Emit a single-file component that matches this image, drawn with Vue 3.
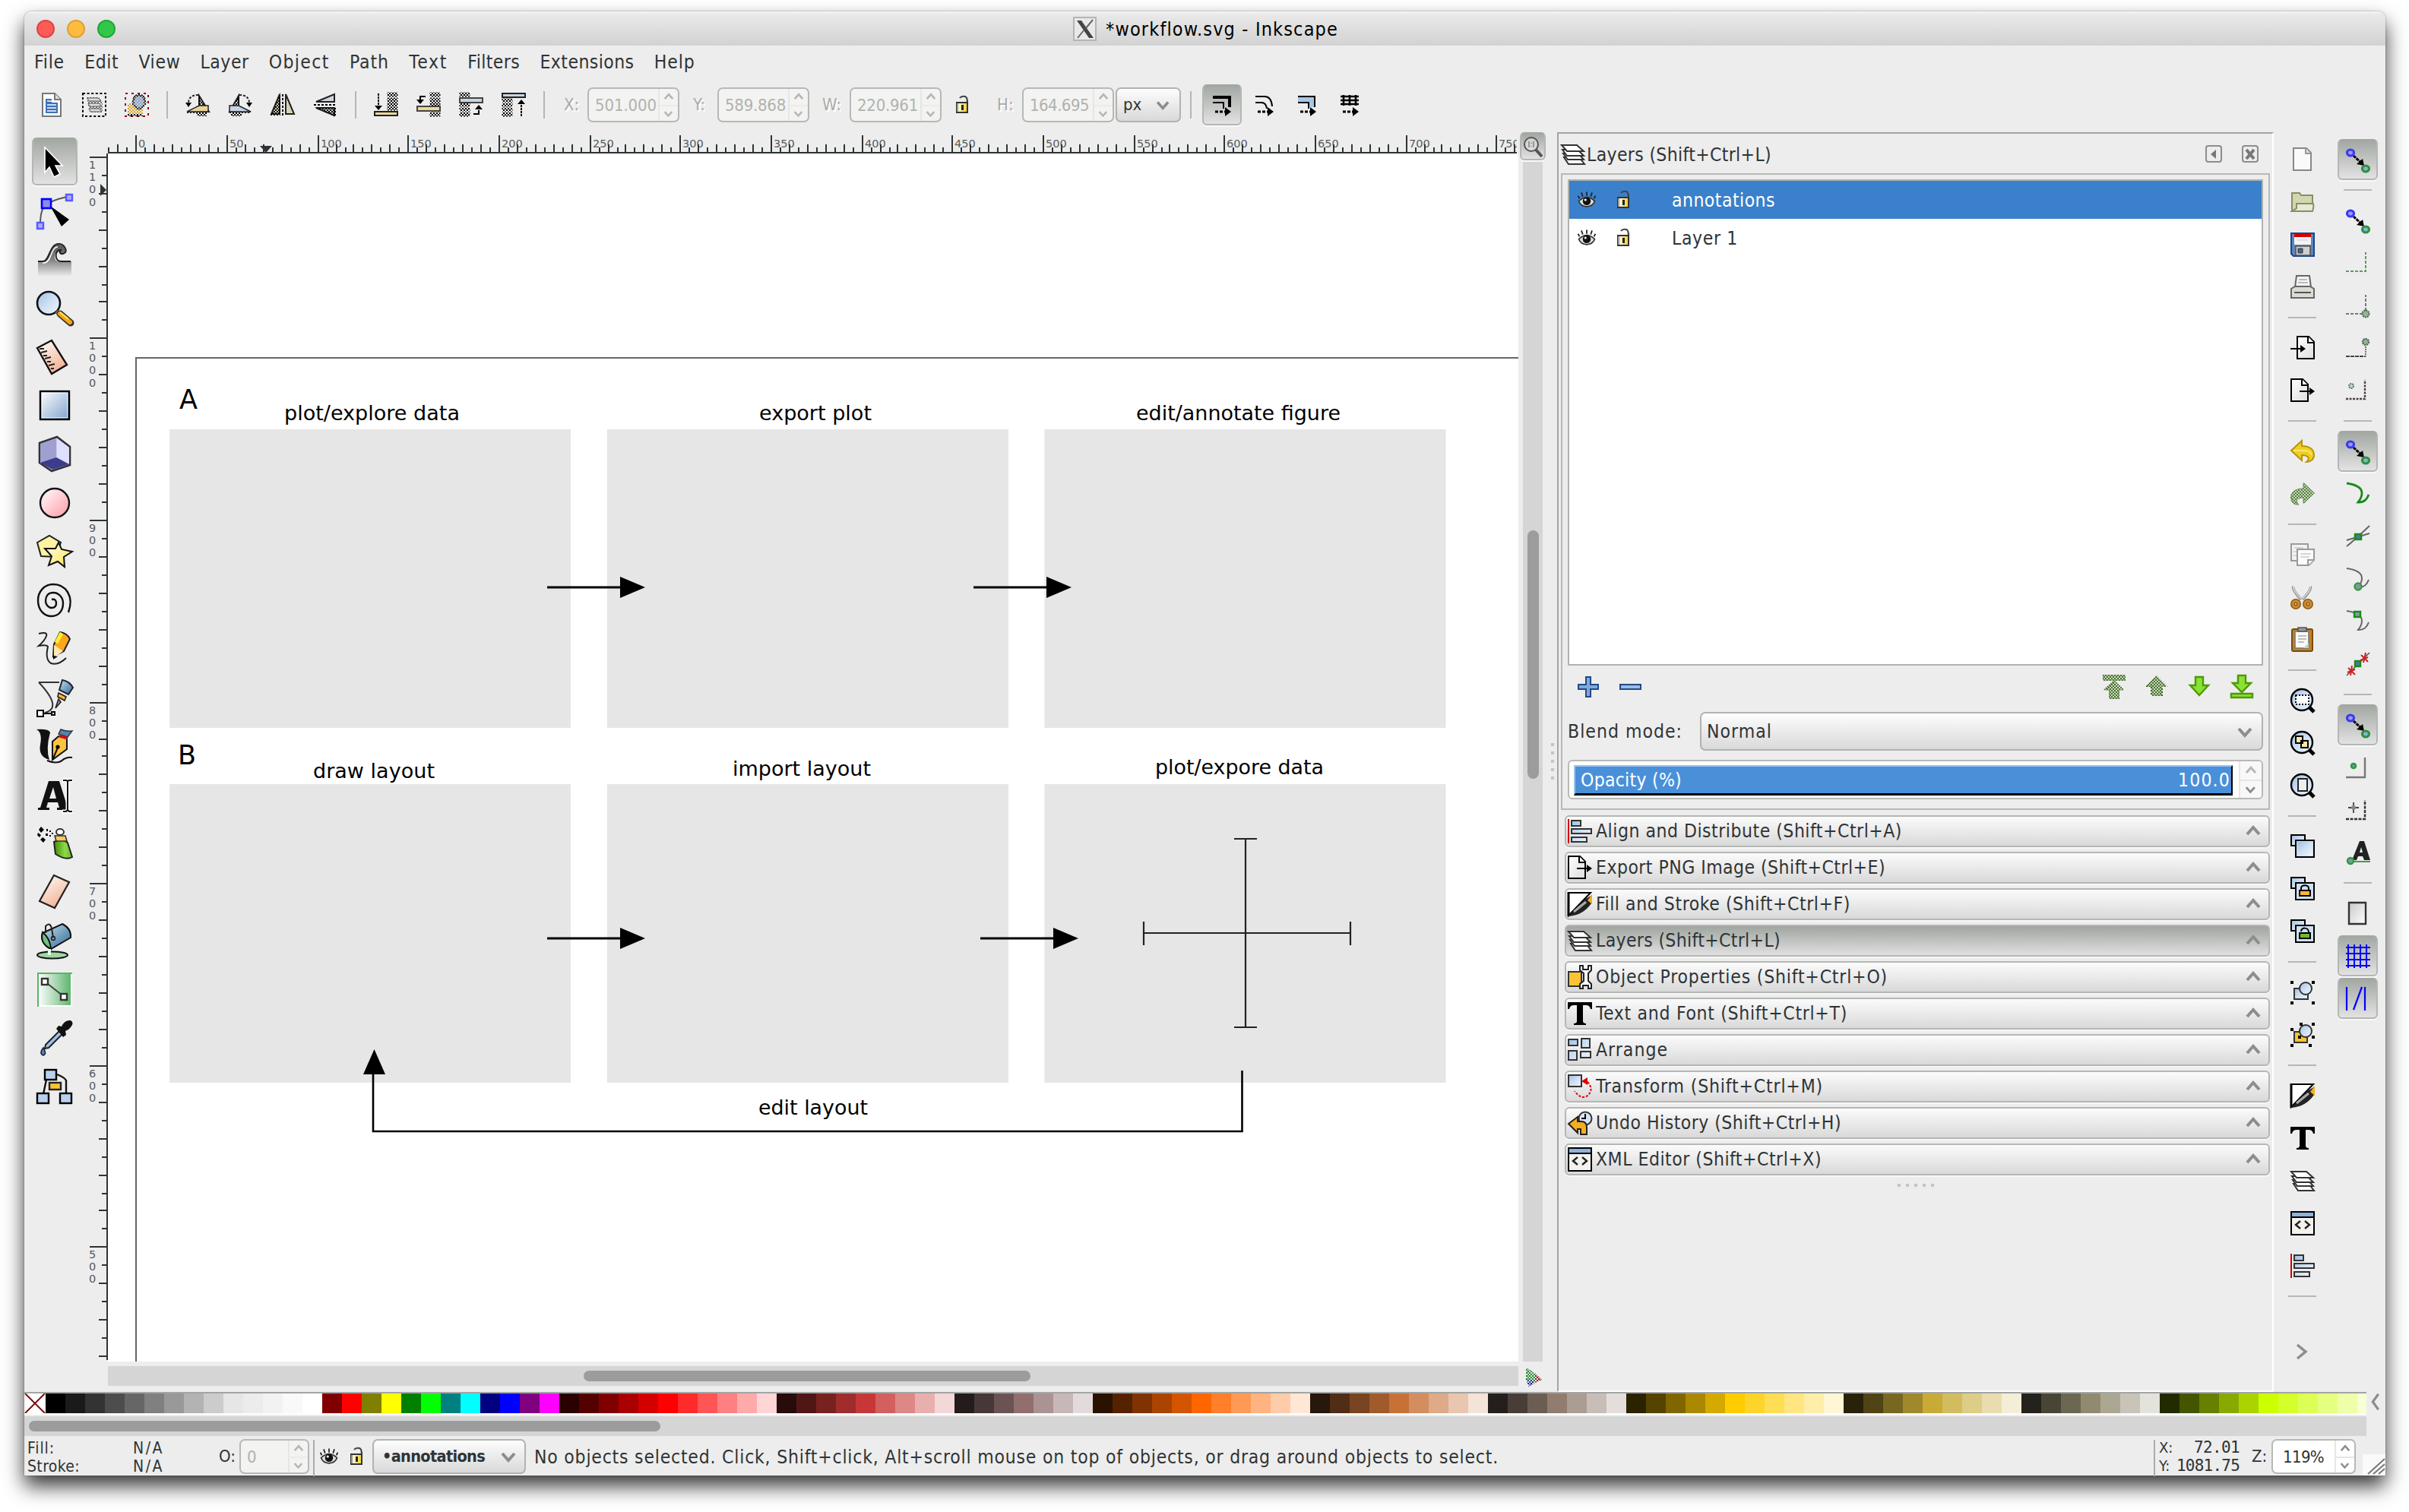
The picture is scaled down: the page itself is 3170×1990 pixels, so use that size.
<script setup>
// Sets letter-spacing so that a label takes a fixed advance width.
const vFit = {
  mounted(el, { value }) {
    if (!value) return
    const width = el.getBoundingClientRect().width
    el.style.letterSpacing = (value - width) / el.textContent.length + 'px'
  },
}

const menus = [
  ['File', 40], ['Edit', 45], ['View', 55], ['Layer', 64], ['Object', 80],
  ['Path', 52], ['Text', 51], ['Filters', 69], ['Extensions', 124], ['Help', 54],
]

const commands = [
  ['selall', 'selgroup', 'desel'],
  ['rotl', 'rotr', 'fliph', 'flipv'],
  ['tobottom', 'lower', 'raise', 'totop'],
]
const affect = ['affStroke', 'affCorner', 'affGrad', 'affPat']
const tools = [
  'tSelect', 'tNode', 'tTweak', 'tZoom', 'tMeasure', 'tRect', 'tBox', 'tEllipse', 'tStar', 'tSpiral',
  'tPencil', 'tPen', 'tCallig', 'tText', 'tSpray', 'tEraser', 'tBucket', 'tGradient', 'tDropper', 'tConnector',
]
const commandBar = [
  'new', 'open', 'save', 'print', '|', 'import', 'export', '|', 'undo', 'redo', '|', 'copy', 'cut', 'paste', '|',
  'zoomSel', 'zoomDraw', 'zoomPage', '|', 'dup', 'clone', 'unlink', '|', 'group', 'ungroup', '|',
  'fill', 'text', 'layers', 'xml', 'align', '|',
]
const snapBar = [
  '*snap', '|', 'snap', 'snBox', 'snBoxC', 'snBoxM', 'snBoxI', '|', '*snap', 'snPath', 'snCross', 'snCusp', 'snSmooth',
  'snMid', '|', '*snap', 'snObj', 'snRot', 'snText', '|', 'snPage', '*snGrid', '*snGuide',
]
const dialogs = [
  ['Align and Distribute (Shift+Ctrl+A)', 'align', 403], ['Export PNG Image (Shift+Ctrl+E)', 'export', 381],
  ['Fill and Stroke (Shift+Ctrl+F)', 'fill', 335], ['Layers (Shift+Ctrl+L)', 'layers', 243],
  ['Object Properties (Shift+Ctrl+O)', 'props', 384], ['Text and Font (Shift+Ctrl+T)', 'text', 331],
  ['Arrange', 'arrange', 95], ['Transform (Shift+Ctrl+M)', 'transform', 299],
  ['Undo History (Shift+Ctrl+H)', 'history', 323], ['XML Editor (Shift+Ctrl+X)', 'xml', 297],
]

const palette = (
  '000000 1a1a1a 333333 4d4d4d 666666 808080 999999 b3b3b3 cccccc e6e6e6 ececec f2f2f2 f9f9f9 ffffff ' +
  '800000 ff0000 808000 ffff00 008000 00ff00 008080 00ffff 000080 0000ff 800080 ff00ff ' +
  '2b0000 550000 800000 aa0000 d40000 ff0000 ff2a2a ff5555 ff8080 ffaaaa ffd5d5 ' +
  '280b0b 501616 782121 a02c2c c83737 d35f5f de8787 e9afaf f4d7d7 241c1c 483737 6c5353 916f6f ac9393 c8b7b7 e3dbdb ' +
  '2b1100 552200 803300 aa4400 d45500 ff6600 ff7f2a ff9955 ffb380 ffccaa ffe6d5 ' +
  '28170b 502d16 784421 a05a2c c87137 d38d5f deaa87 e9c6af f4e3d7 241f1c 483e37 6c5d53 917c6f ac9d93 c8beb7 e3dedb ' +
  '2b2200 554400 806600 aa8800 d4aa00 ffcc00 ffd42a ffdd55 ffe680 ffeeaa fff6d5 ' +
  '28220b 504416 786721 a0892c c8ab37 d3bc5f decd87 e9ddaf f4eed7 24221c 484537 6c6753 918a6f aca793 c8c4b7 e3e2db ' +
  '222b00 445500 668000 88aa00 aad400 ccff00 d4ff2a ddff55 e5ff80 eeffaa f6ffd5'
).split(' ').map((c) => '#' + c)

// Ruler ticks, in ruler pixels
const hTicks = []
for (let i = -3; i <= 152; i++) {
  const x = 36.6 + i * 11.933
  hTicks.push({ x: Math.round(x / 2) * 2, h: i % 10 === 0 ? 22 : i % 2 === 0 ? 10 : 6, label: i % 10 === 0 ? String(i * 5) : '' })
}
const vTicks = []
for (let i = 0; i <= 66; i++) {
  const y = 3.6 + i * 23.92
  vTicks.push({ y: Math.round(y / 2) * 2, w: i % 10 === 0 ? 22 : i % 2 === 0 ? 10 : 6, digits: i % 10 === 0 ? String(1100 - i * 10).split('') : [] })
}

const boxes = [[223, 565], [799, 565], [1374.5, 565], [223, 1032], [799, 1032], [1374.5, 1032]]
const arrows = [[720, 773], [1281, 773], [720, 1235], [1290, 1235]]
const captions = [
  ['plot/explore data', 374, 552, 231], ['export plot', 999, 552, 148], ['edit/annotate figure', 1495, 552, 269],
  ['draw layout', 412, 1023, 160], ['import layout', 964, 1020, 182], ['plot/expore data', 1520, 1018, 222],
  ['edit layout', 998, 1466, 144],
]

const S = 'fill="none" stroke="#000" stroke-width="2"'
const snap =
  '<path d="M10 11l10 9" stroke="#000" stroke-width="3" stroke-dasharray="4 1"/><path d="M24 24l-10-2 8-7z"/><ellipse cx="6" cy="7" rx="4.5" ry="4" fill="#9a9aff" stroke="#3a3aee" stroke-width="3.2"/><ellipse cx="26" cy="28" rx="4.500" ry="4" fill="#86b6cc" stroke="#2f8f3f" stroke-width="3.200"/>'
const lens = `<ellipse cx="15" cy="15" rx="14" ry="14" fill="url(#blueG)" stroke="#000" stroke-width="2.4"/><path d="M25 25l6 6" stroke="#000" stroke-width="5"/>`
const twoPages = `<path d="M1 1h18v14H1z" fill="url(#blueG)" ${S}/><path d="M7 8h24v22H7z" fill="#cfe0f2" stroke="#000" stroke-width="2"/>`
const layersIcon = `<g fill="#fff" stroke="#333" stroke-width="2"><path d="M4 20h20l7 9H10z"/><path d="M3 15h20l7 8H9z"/><path d="M2 10h20l8 8H8z"/><path d="M1 4h20l9 8H8z"/></g>`

const art = {
  selall: '<path d="M4 1h16l8 8v22H4z" fill="#fff" stroke="#777" stroke-width="2"/><path d="M20 1v8h8" fill="#ddd" stroke="#777" stroke-width="2"/><path d="M8 8h8v5h8v14H8z" fill="#3b73b9"/><path d="M10 11h6M10 16h12M10 20h12M10 24h12" stroke="#fff" stroke-width="1.6"/>',
  selgroup: '<rect x="1" y="1" width="30" height="30" fill="none" stroke="#000" stroke-width="2" stroke-dasharray="3 2.6"/><g mask="url(#dither)"><path d="M6 6h16l5 6v14H10z" fill="#777"/></g><path d="M7 7h14l4 4H9zM8 14h14l4 4H10zM9 21h14l3 4H11z" fill="#ddd" stroke="#555"/>',
  desel: '<rect x="1" y="1" width="30" height="30" fill="none" stroke="#800" stroke-width="2" stroke-dasharray="3 5"/><g mask="url(#dither)"><path d="M4 14h20v14H4z" fill="#d9a520"/><path d="M4 28h20v3H4z"/></g><ellipse cx="19" cy="12" rx="8" ry="9" fill="#c3cbd8"/><g mask="url(#dither)"><ellipse cx="19" cy="12" rx="8" ry="9" fill="#8fa3c0" stroke="#000" stroke-width="3"/></g><ellipse cx="19" cy="12" rx="8" ry="9" fill="none" stroke="#666"/>',
  rotl: '<path d="M18 4v20l13 1z" fill="#e8e8e8" stroke="#222" stroke-width="2"/><g mask="url(#dither)"><path d="M17 3v21h13zM2 24h28v3H2zM14 26h14v5H16z"/></g><path d="M2 25L18 17h12v8z" fill="#e9d49a" stroke="#222" stroke-width="1.5"/><path d="M17 3C8 3 4 7 4 14" fill="none" stroke="#222" stroke-width="2" stroke-dasharray="3 2"/><path d="M0 13h8l-4 6z"/>',
  rotr: '<path d="M14 4v20L2 25z" fill="#e8e8e8" stroke="#222" stroke-width="2"/><g mask="url(#dither)"><path d="M15 3v21H2zM2 24h28v3H2zM4 26h14v5H4z"/></g><path d="M30 25L14 17H2v8z" fill="#c8d4e4" stroke="#222" stroke-width="1.5"/><path d="M15 3c9 0 13 4 13 11" fill="none" stroke="#222" stroke-width="2" stroke-dasharray="3 2"/><path d="M32 13h-8l4 6z"/>',
  fliph: '<path d="M12 2v26H1zM20 2v26h11z" fill="#d8d2b8" stroke="#222" stroke-width="2"/><g mask="url(#dither)"><path d="M13 0v30H0z"/></g><path d="M16 2v28" stroke="#000" stroke-width="2" stroke-dasharray="3 2"/>',
  flipv: '<path d="M28 2v10H4zM28 30V20H4z" fill="#ccd6e0" stroke="#222" stroke-width="2"/><g mask="url(#dither)"><path d="M30 32V19H2z"/></g><path d="M1 16h29" stroke="#000" stroke-width="2" stroke-dasharray="3 2"/>',
  tobottom: '<path d="M6 1v20" stroke="#000" stroke-width="2" stroke-dasharray="3 1"/><path d="M1 17h10l-5 6z"/><path d="M1 25h30v5H1z" fill="#ecd79a" stroke="#222" stroke-width="2"/><g mask="url(#dither)"><path d="M18 0h13v5H18zM18 7h13v5H18zM18 13h13v5H18zM18 19h13v4H18z" stroke="#000"/></g>',
  lower: '<path d="M12 5H5v5" fill="none" stroke="#000" stroke-width="2"/><path d="M0 9h10l-5 6z"/><path d="M1 18h30v6H1z" fill="#ecd79a" stroke="#444" stroke-width="2"/><g mask="url(#dither)"><path d="M18 0h13v5H18zM18 7h13v5H18zM18 13h13v4H18zM18 26h13v5H18z" stroke="#000"/></g>',
  raise: '<path d="M1 7h30v6H1z" fill="#c6d5e4" stroke="#444" stroke-width="2"/><path d="M19 28h7v-5" fill="none" stroke="#000" stroke-width="2"/><path d="M21 22h10l-5-6z"/><g mask="url(#dither)"><path d="M1 0h13v5H1zM1 14h13v4H1zM1 20h13v4H1zM1 26h13v5H1z" stroke="#000"/></g>',
  totop: '<path d="M1 1h30v5H1z" fill="#c6d5e4" stroke="#222" stroke-width="2"/><path d="M26 12v19" stroke="#000" stroke-width="2" stroke-dasharray="3 1"/><path d="M21 15h10l-5-6z"/><g mask="url(#dither)"><path d="M1 8h13v4H1zM1 14h13v4H1zM1 20h13v4H1zM1 26h13v5H1z" stroke="#000"/></g>',
  affStroke: '<path d="M4 6h22v13" fill="none" stroke="#000" stroke-width="4"/><path d="M4 13h14v8" fill="none" stroke="#000" stroke-width="2"/><path d="M7 25h14" stroke="#000" stroke-width="3" stroke-dasharray="4 2"/><path d="M20 19l8 6-8 6z"/>',
  affCorner: '<path d="M4 5h12q9 0 10 13" fill="none" stroke="#000" stroke-width="2"/><path d="M4 13h8q6 0 7 8" fill="none" stroke="#000" stroke-width="2"/><path d="M7 25h14" stroke="#000" stroke-width="3" stroke-dasharray="4 2"/><path d="M20 19l8 6-8 6z"/>',
  affGrad: '<path d="M4 5h22v14h-8v-6H4z" fill="#a9c6e6"/><path d="M4 5h22v14M4 13h14v8" fill="none" stroke="#000" stroke-width="2"/><path d="M7 25h14" stroke="#000" stroke-width="3" stroke-dasharray="4 2"/><path d="M20 19l8 6-8 6z"/>',
  affPat: '<path d="M4 5h24M4 10h24M4 15h24M8 3v14M16 3v14M24 3v14" stroke="#000" stroke-width="2.600"/><path d="M7 25h14" stroke="#000" stroke-width="3" stroke-dasharray="4 2"/><path d="M20 19l8 6-8 6z"/>',
  lock: '<path d="M12 7q2-3 7-2 3 1 3 8" fill="none" stroke="#444" stroke-width="2.2"/><path d="M8 13h14v13H8z" fill="url(#lockG)" stroke="#333" stroke-width="2"/><path d="M9 14v11" stroke="#999" stroke-width="2"/><path d="M14 16h3v7h-3z" fill="#222"/>',
  eye: '<path d="M4 18q12-12 24 0q-3 8-12 8t-12-8z" fill="#ddd" stroke="#333" stroke-width="2"/><circle cx="16" cy="18" r="6" fill="#111"/><circle cx="14" cy="16" r="1.8" fill="#fff"/><path d="M5 14l-2-4M10 11L8 5M16 10V4M22 11l2-6M27 14l2-4" stroke="#222" stroke-width="2"/>',
  new: '<path d="M4 1h17l6 6v23H4z" fill="#fafafa" stroke="#888" stroke-width="2"/><path d="M20 1v7h7" fill="#ddd" stroke="#999" stroke-width="2"/>',
  open: '<path d="M2 28V4h10l2 3h15v14" fill="#d3d7ae" stroke="#8a8d68" stroke-width="2"/><path d="M2 28l6-4V18h22q1 4-1 10z" fill="#e6ead2" stroke="#8a8d68" stroke-width="2"/>',
  save: '<path d="M1 1h30v30H4l-3-3z" fill="#5d86bd" stroke="#1d4586" stroke-width="2"/><path d="M5 1h22v15H5z" fill="#f4f4f4"/><path d="M5 1h22v5H5z" fill="#d40000"/><path d="M9 10h14" stroke="#ccc"/><path d="M7 18h19v12H7z" fill="#d0d0d0" stroke="#555" stroke-width="1.6"/><path d="M10 21h6v6h-6z" fill="#3a6aa8" stroke="#333"/>',
  print: '<path d="M8 1h17l2 15H6z" fill="#f4f4f4" stroke="#666" stroke-width="2"/><path d="M11 6h11M10 10h13" stroke="#aaa" stroke-width="1.6"/><path d="M1 18l5-3h20l5 3v12H1z" fill="#d9dcd5" stroke="#666" stroke-width="2"/><path d="M5 23h22" stroke="#555" stroke-width="2"/>',
  import: '<path d="M9 1h15l7 7v22H9z" fill="url(#whiteG)" stroke="#000" stroke-width="2"/><path d="M23 1v8h8" fill="#fff" stroke="#000" stroke-width="2"/><path d="M0 17h16" stroke="#000" stroke-width="2"/><path d="M13 12l7 5-7 5z"/>',
  export: '<path d="M1 1h15l7 7v22H1z" fill="url(#whiteG)" stroke="#000" stroke-width="2"/><path d="M15 1v8h8" fill="#fff" stroke="#000" stroke-width="2"/><path d="M12 17h16" stroke="#000" stroke-width="2"/><path d="M25 12l7 5-7 5z"/>',
  undo: '<path d="M1 15L15 2v7c12 0 16 6 16 12s-5 9-10 9c5-4 3-9-6-9v7z" fill="#f0cf20" stroke="#b8930a" stroke-width="2"/><path d="M4 15h14c6 0 9 3 10 6" fill="none" stroke="#fff08a" stroke-width="1.5"/>',
  redo: '<g mask="url(#dither)"><path d="M32 15L17 1v8C4 9 0 15 0 21s5 10 11 10c-5-4-3-10 6-10v8z" fill="#2f6a10"/></g><path d="M31 15L17 2v7C5 9 1 15 1 21s5 9 10 9c-5-4-3-9 6-9v7z" fill="#8fae7c" fill-opacity=".35" stroke="#6a8a58" stroke-width="1"/>',
  copy: '<g fill="#f2f2f2" stroke="#9a9a9a" stroke-width="2"><path d="M1 2h22v22H1z"/><path d="M9 9h22v14l-7 7H9z" fill="#fbfbfb"/><path d="M31 23h-8v7"/></g><path d="M13 15h14M13 19h12M5 7h12M4 12h4M4 17h4" stroke="#ccc" stroke-width="1.6"/>',
  cut: '<path d="M4 2q-2 4 10 17M26 2q2 4-10 17" fill="none" stroke="#999" stroke-width="4"/><path d="M4 2q-1 5 10 16M26 2q1 5-10 16" fill="none" stroke="#ddd" stroke-width="1.5"/><g fill="none" stroke="#8a5a10" stroke-width="6"><circle cx="7" cy="25" r="4"/><circle cx="23" cy="25" r="4"/></g><g fill="none" stroke="#d08a30" stroke-width="3"><circle cx="7" cy="25" r="4"/><circle cx="23" cy="25" r="4"/></g>',
  paste: '<rect x="2" y="2" width="27" height="29" rx="2" fill="#c08428" stroke="#7a4c08" stroke-width="2"/><path d="M6 5h18v22H6z" fill="#fafafa" stroke="#777" stroke-width="1.6"/><path d="M10 0h11v5H10z" fill="#999" stroke="#555" stroke-width="1.6"/><path d="M10 11h11M10 15h11M10 19h8" stroke="#aaa" stroke-width="1.6"/><path d="M24 20l-7 7h7z" fill="#ccc"/>',
  zoomSel: lens + '<path d="M7 9h17v12H7z" fill="#fff" stroke="#000" stroke-width="2" stroke-dasharray="2 2"/>',
  zoomDraw: lens + '<path d="M7 7h9v9H7zM14 13h9v9h-9z" fill="#ffe9a0" stroke="#000" stroke-width="2"/>',
  zoomPage: lens + '<path d="M10 7h12v16H10z" fill="#eee" stroke="#222" stroke-width="2"/>',
  dup: twoPages + '<path d="M9 10h20v18H9z" fill="url(#blueG)"/>',
  clone: twoPages + '<path d="M14 18v-3c0-5 10-5 10 0v3" fill="none" stroke="#000" stroke-width="2"/><path d="M12 18h14v7H12z" fill="#ffb62e" stroke="#000" stroke-width="2"/>',
  unlink: twoPages + '<path d="M14 16c0-6 10-6 10 1" fill="none" stroke="#000" stroke-width="2"/><path d="M12 18h14v7H12z" fill="#6fba2e" stroke="#000" stroke-width="2"/>',
  group: '<path d="M5 11h18v14H5z" fill="url(#blueG)" stroke="#333" stroke-width="2"/><ellipse cx="20" cy="11" rx="8" ry="8" fill="url(#blueG)" stroke="#333" stroke-width="2"/><path d="M0 1h4v4H0zM28 1h4v4h-4zM0 28h4v4H0zM28 28h4v4h-4z"/>',
  ungroup: '<path d="M5 12h17v14H5z" fill="#ffc22e" stroke="#333" stroke-width="2"/><ellipse cx="20" cy="11" rx="8" ry="8" fill="url(#blueG)" stroke="#333" stroke-width="2"/><path d="M0 7h4v4H0zM28 0h4v4h-4zM0 28h4v4H0zM24 28h4v4h-4zM12 0h4v4h-4zM28 17h4v4h-4zM10 17h4v4h-4z"/>',
  fill: '<path d="M1 1h29L1 31z" fill="#fff" stroke="#000" stroke-width="2"/><path d="M1 0v32" stroke="#000" stroke-width="3"/><path d="M0 32Q14 20 22 10L32 4 31 15Q20 31 0 32z" fill="#222"/><path d="M8 26L24 13" stroke="#aaa" stroke-width="3"/><path d="M32 3l-6 8 6 5z" fill="#f5b020"/>',
  text: '<path d="M0 1h32v9h-2q-1-5-6-5h-4v21q0 3 4 3v2H8v-2q4 0 4-3V5H8q-5 0-6 5H0z"/>',
  layers: layersIcon,
  xml: '<path d="M1 1h30v30H1z" fill="#f4f2ec" stroke="#000" stroke-width="2"/><path d="M2 2h28v5H2z" fill="#8fb2dc"/><path d="M1 8h30" stroke="#000" stroke-width="2"/><path d="M13 13l-6 5 6 5M19 13l6 5-6 5" fill="none" stroke="#222" stroke-width="2.4"/>',
  align: '<path d="M1 0v32" stroke="#d00000" stroke-width="2"/><g fill="url(#blueG)" stroke="#333" stroke-width="2"><path d="M5 2h12v7H5zM5 13h26v6H5zM5 24h20v6H5z"/></g>',
  props: '<path d="M1 9h17v19H1z" fill="#fcc433" stroke="#333" stroke-width="2"/><path d="M16 1v6l5 4v10l-5 4v6h4v-4h7v4h4v-6l-4-4V11l4-4V1h-4v5h-7V1z" fill="#fff" stroke="#222" stroke-width="2"/>',
  arrange: '<g fill="url(#blueG)" stroke="#333" stroke-width="2"><path d="M1 2h12v8H1zM18 1h11v12H18zM1 17h11v12H1zM17 18h13v8H17z"/></g>',
  transform: '<path d="M1 1h17v15H1z" fill="url(#blueG)" stroke="#333" stroke-width="2"/><path d="M26 10q9 10 0 18q-8 6-17-6" fill="none" stroke="#d00" stroke-width="2" stroke-dasharray="3 2"/><path d="M18 9l8-5v10z" fill="#d00"/>',
  history: '<circle cx="23" cy="10" r="8.5" fill="#d7e4f3" stroke="#333" stroke-width="2"/><path d="M23 4v6h-5" fill="none" stroke="#000" stroke-width="2"/><path d="M1 17l12-9v6h5q7 0 7 8v9h-8v-7h-4v5z" fill="#f6ae1f" stroke="#222" stroke-width="2"/>',
  snap,
  snBox: '<path d="M0 27h26V2" fill="none" stroke="#5f9a66" stroke-width="2" stroke-dasharray="4 2"/>',
  snBoxC: '<path d="M0 27h26V2" fill="none" stroke="#777" stroke-width="2" stroke-dasharray="4 2"/><circle cx="26" cy="27" r="4.5" fill="#9ab09a" stroke="#4a6a4a" stroke-width="2" stroke-dasharray="2 1"/>',
  snBoxM: '<path d="M0 27h26" stroke="#444" stroke-width="2" stroke-dasharray="5 1"/><path d="M26 14v13" stroke="#777" stroke-width="2" stroke-dasharray="2 1"/><circle cx="26" cy="8" r="4" fill="#9ab09a" stroke="#4a6a4a" stroke-width="2.4" stroke-dasharray="2 1"/>',
  snBoxI: '<path d="M0 27h25V2" fill="none" stroke="#444" stroke-width="2.4" stroke-dasharray="3 1.5"/><circle cx="7" cy="10" r="3" fill="#c4d4c4" stroke="#5a7a5a" stroke-width="2" stroke-dasharray="2 1"/>',
  snPath: '<path d="M1 2q20 3 20 13 0 6-5 12 10 1 14-10" fill="none" stroke="#1b8a1b" stroke-width="2.8"/>',
  snCross: '<path d="M1 21l30-9M1 29Q10 22 31 2" fill="none" stroke="#666" stroke-width="2"/><rect x="12" y="13" width="8" height="7" fill="#4a7a9a" stroke="#1b8a1b" stroke-width="2.4"/>',
  snCusp: '<path d="M1 2q20 3 20 13 0 6-5 12 10 1 14-10" fill="none" stroke="#666" stroke-width="2"/><circle cx="16" cy="26" r="4.5" fill="#7a9ab0" stroke="#3a9a3a" stroke-width="2.4"/>',
  snSmooth: '<path d="M1 2q20 3 20 13 0 6-5 12 10 1 14-10" fill="none" stroke="#666" stroke-width="2"/><rect x="11" y="3" width="8" height="7" fill="#7a9ab0" stroke="#1b8a1b" stroke-width="2.4"/>',
  snMid: '<path d="M1 31L31 1" stroke="#555" stroke-width="1.6"/><rect x="12" y="12" width="7" height="7" fill="#4a7a9a" stroke="#1b8a1b" stroke-width="2.4"/><path d="M3 21l9 9M8 18l-2 13M2 27l10-4M20 4l9 9M26 1l-3 13M19 11l10-4" stroke="#d02020" stroke-width="2"/>',
  snObj: '<path d="M0 29h25V3" fill="none" stroke="#777" stroke-width="2.4"/><circle cx="10" cy="14" r="3" fill="#7a9ab0" stroke="#2f9a3f" stroke-width="2.6"/>',
  snRot: '<path d="M0 28h25V3" fill="none" stroke="#333" stroke-width="2.4" stroke-dasharray="4 1.5"/><path d="M3 13h14M10 6v14" stroke="#444" stroke-width="1.8"/><circle cx="10" cy="13" r="3" fill="#888"/>',
  snText: '<path d="M8 26L18 1h6l8 25h-8l-2-5h-6l-2 5zM18 16h4l-2-7z" fill-rule="evenodd" fill="#222"/><path d="M2 28h30" stroke="#4a9a4a" stroke-width="2"/><circle cx="6" cy="27" r="4" fill="#7a9ab0" stroke="#2f9a3f" stroke-width="2.4"/>',
  snPage: '<path d="M4 2h22v28H4z" fill="url(#pageG)" stroke="#333" stroke-width="2.4"/>',
  snGrid: '<path d="M0 5h32M0 13h32M0 21h32M0 29h32M3 1v31M11 1v31M19 1v31M27 1v31" stroke="#0000ff" stroke-width="2"/>',
  snGuide: '<path d="M1 1v31M25 1v31M21 1L10 31" stroke="#0000ff" stroke-width="2.2" fill="none"/>',
  chevU: '<path d="M8 20l8-9 8 9" fill="none" stroke="#8b8e89" stroke-width="4"/>',
  chevD: '<path d="M7 12l8 9 8-9" fill="none" stroke="#8b8e89" stroke-width="4"/>',
  chevR: '<path d="M9 8l11 9L9 26" fill="none" stroke="#8b8e89" stroke-width="3.4"/>',
  chevL: '<path d="M20 5l-8 11 8 11" fill="none" stroke="#8b8e89" stroke-width="3.4"/>',
  plus: '<path d="M13 3h6v10h10v6H19v10h-6V19H3v-6h10z" fill="#7fa9dc" stroke="#204a87" stroke-width="2"/>',
  minus: '<path d="M2 13h27v6H2z" fill="#9abce6" stroke="#204a87" stroke-width="2"/>',
  lTop: '<g mask="url(#dither)"><path d="M1 0h30v8H1zM16 7l14 13h-7v12H9V20H2z" fill="#245a05"/></g><path d="M2 1h28v6H2zM16 8l12 12h-6v11H10V20H4z" fill="#8fb070" fill-opacity=".3" stroke="#6f8f60" stroke-width="1"/>',
  lUp: '<g mask="url(#dither)"><path d="M16 1l15 15h-7v12H8V16H1z" fill="#245a05"/></g><path d="M16 3l12 12h-6v12H10V15H4z" fill="#8fb070" fill-opacity=".3" stroke="#6f8f60" stroke-width="1"/>',
  lDown: '<path d="M11 3h10v11h7L16 27 4 14h7z" fill="#8ae234" stroke="#4e9a06" stroke-width="2.4"/>',
  lBottom: '<path d="M11 1h10v10h7L16 23 4 11h7zM2 25h28v5H2z" fill="#8ae234" stroke="#4e9a06" stroke-width="2.4"/>',
  tSelect: '<path d="M11 4v33l6-7 6 13 8-4-6-11h9z" fill="#000" stroke="#fff" stroke-width="1.6"/>',
  tNode: '<path d="M5 41Q5 22 12 16T40 5" fill="none" stroke="#555" stroke-width="2"/><path d="M18 17l25 18-10 9z"/><rect x="7" y="8" width="12" height="12" fill="#8a8af0" stroke="#0000ff" stroke-width="2.6"/><rect x="39" y="2" width="8" height="8" fill="#aaf" stroke="#5a5aff" stroke-width="2.4"/><rect x="1" y="39" width="8" height="8" fill="#aaf" stroke="#5a5aff" stroke-width="2.4"/>',
  tTweak: '<path d="M2 26h7c8 0 8-22 20-22 8 0 12 9 8 12-5 3-8-1-8-4-6 1-7 14 0 14h17v20H2z" fill="url(#grayG)"/><path d="M2 26h7c8 0 8-23 20-23 8 0 12 9 8 12-5 3-8-1-5-4-8-1-9 15 0 15h13" fill="none" stroke="#222" stroke-width="2"/><path d="M8 28h3c9-2 8-21 17-21" fill="none" stroke="#fff" stroke-width="1.4"/>',
  tZoom: '<circle cx="16" cy="17" r="15" fill="url(#blueG)" stroke="#111" stroke-width="2.6"/><path d="M26 28l7 6" stroke="#777" stroke-width="5"/><path d="M31 31L45 43" stroke="#333" stroke-width="9" stroke-linecap="round"/><path d="M31 31L44 42" stroke="#f9a416" stroke-width="6" stroke-linecap="round"/><path d="M31 29L42 38" stroke="#ffe95a" stroke-width="2"/>',
  tMeasure: '<path d="M1 12L20 2l20 32-20 12z" fill="url(#skinG)" stroke="#111" stroke-width="2.4"/><path d="M4 13l6 0M6 18l8-2M9 22h5M11 26l8-2M14 30h5M16 35l8-2M19 39h4" stroke="#222" stroke-width="2"/>',
  tRect: '<rect x="5" y="5" width="38" height="37" fill="url(#blueD)" stroke="#000" stroke-width="2.4"/><rect x="7.500" y="7.500" width="33" height="32" fill="none" stroke="#fff" stroke-opacity=".6"/>',
  tBox: '<path d="M4 9L27 1l17 13v24l-24 8L4 35z" fill="#c8c8ee" stroke="#333" stroke-width="2.6"/><path d="M5 10L26 3v26L5 36z" fill="#a0a0d0"/><path d="M27 3l16 12v22L27 28z" fill="#dedeff"/><path d="M5 35l21-7 17 9-22 7z" fill="#3c3c8c"/>',
  tEllipse: '<ellipse cx="24" cy="24" rx="19" ry="19" fill="url(#pinkG)" stroke="#111" stroke-width="2.4"/>',
  tStar: '<path d="M1 12L17 3l15 9-6 19-20-1z" fill="#fff2a0" stroke="#222" stroke-width="2"/><path d="M29 12l4 9 14 3-11 7 1 13-9-7-12 5 4-12-9-10h14z" fill="url(#yelG)" stroke="#111" stroke-width="2"/>',
  tSpiral: '<path d="M42 40c8-22-4-37-20-37C10 3 2 13 2 24c0 13 8 21 18 21 9 0 15-7 15-17 0-8-6-14-13-14s-10 5-10 11c0 5 4 9 8 9s6-2 6-6-2-6-6-5" fill="none" stroke="#111" stroke-width="2.4"/>',
  tPencil: '<path d="M3 4q12-3 10 3T3 20q10-2 12 1-4 17 4 22 10 3 20-7" fill="none" stroke="#222" stroke-width="2"/><path d="M22 34l1-16L31 2q9 1 13 9l-8 16z" fill="#fba71b" stroke="#222" stroke-width="2"/><path d="M26 16l7-13" stroke="#ffee30" stroke-width="5"/><path d="M23 19l12 8-12 9z" fill="#ffe9b0"/><path d="M22 33v5l6-4z"/>',
  tPen: '<path d="M3 4h27M3 4q32 34 8 40" fill="none" stroke="#333" stroke-width="2"/><path d="M30 14L34 1q10 2 14 10l-6 9z" fill="url(#blueD2)" stroke="#223" stroke-width="2"/><path d="M29 18l10 5-2 5-9-5z" fill="#fcb52a" stroke="#222" stroke-width="1.6"/><path d="M29 26l-4 12 7-8z" fill="#999" stroke="#222" stroke-width="1.6"/><path d="M8 45h14" stroke="#000" stroke-width="2"/><rect x="1" y="41" width="8" height="8" fill="#fff" stroke="#000" stroke-width="2"/><rect x="20" y="43" width="4" height="4" fill="#fff" stroke="#000" stroke-width="2"/>',
  tCallig: '<path d="M0 2q16-1 18 4-6 22-1 36Q2 38 5 22 8 6 0 2z" fill="#111"/><path d="M14 43q14 6 22-2 6-3 11-2" fill="none" stroke="#111" stroke-width="2"/><path d="M21 42V18l8-7 11 3v14z" fill="#f9c440" stroke="#111" stroke-width="2"/><path d="M22 40l6-14" stroke="#111" stroke-width="2"/><circle cx="28" cy="25" r="2.600"/><path d="M29 8l3-6q8 3 15 2l-6 8z" fill="#4f86b5" stroke="#333" stroke-width="1.4"/><path d="M30 10l11 4" stroke="#d01020" stroke-width="3.500"/>',
  tText: '<path d="M2 44v-3h3L16 6h14l11 35h2v3H27v-3h3l-2-7H15l-2 7h4v3zM17 29h9L22 14z" fill="#111" fill-rule="evenodd"/><path d="M34 5h5l2 2 2-2h5M41 6v38M34 46h5l2-2 2 2h5" fill="none" stroke="#fff" stroke-width="5"/><path d="M35 5h4l2 1 2-1h4M41 6v38M35 46h4l2-2 2 2h4" fill="none" stroke="#111" stroke-width="2"/>',
  tSpray: '<path d="M23 22q10-5 18 1l6 19q-8 5-22-4z" fill="url(#greenD)" stroke="#222" stroke-width="2"/><path d="M24 14h14l2 7H26z" fill="#f8c85a" stroke="#333" stroke-width="1.600"/><ellipse cx="31" cy="9" rx="5" ry="4" fill="#fff" stroke="#333" stroke-width="2"/><path d="M6 2l4 4-4 4-3-4zM2 10l4 3-2 3-3-3zM8 16l4 3-3 4-4-4zM13 5h2v3h-2zM12 11h3v3h-3zM17 7h2v2h-2zM17 13h2v2h-2zM20 10h2v2h-2z"/>',
  tEraser: '<path d="M23 2l20 9L24 45 4 36z" fill="url(#skinG)" stroke="#222" stroke-width="2.2"/>',
  tBucket: '<ellipse cx="21" cy="43" rx="20" ry="4.500" fill="#9fd6a4" stroke="#111" stroke-width="2"/><path d="M8 14L34 2q12 6 11 18L19 35Q4 26 8 14z" fill="url(#blueD2)" stroke="#111" stroke-width="2"/><path d="M8 13q10 8 11 22Q4 28 8 13z" fill="#6fc27c" stroke="#111" stroke-width="2"/><path d="M17 35v8" stroke="#dfd" stroke-width="4"/><path d="M12 14V5q6-6 8 3l2 12" fill="none" stroke="#222" stroke-width="2"/><circle cx="22" cy="21" r="2.400" fill="none" stroke="#222" stroke-width="1.600"/>',
  tGradient: '<rect x="2" y="3" width="44" height="43" fill="url(#greenG)" stroke="#5cb46a" stroke-width="2"/><path d="M3 46h43V4" fill="none" stroke="#fff" stroke-width="2"/><path d="M15 17l19 15" stroke="#444" stroke-width="2"/><rect x="7" y="10" width="8" height="8" fill="#fff" stroke="#333" stroke-width="2.400"/><rect x="32" y="30" width="8" height="8" fill="#fff" stroke="#333" stroke-width="2.400"/>',
  tDropper: '<path d="M30 15L12 33l-1 5 5-1L34 19z" fill="#9cc0ec" stroke="#222" stroke-width="2"/><path d="M26 12l3-4 4 1q4-9 12-8 5 3 0 9-3 4-7 5l1 5-4 3z" fill="#111"/><path d="M9 37q5 8 0 10-6-2 0-10z" fill="#4f86c5" stroke="#223" stroke-width="1.600"/>',
  tConnector: '<path d="M27 8q10 4 12 8v16M13 15L9 34" fill="none" stroke="#111" stroke-width="2.400"/><g fill="#b9d0ee" stroke="#000" stroke-width="2.400"><rect x="11" y="2" width="15" height="13"/><rect x="1" y="33" width="15" height="13"/><rect x="31" y="33" width="15" height="13"/></g><rect x="17" y="19" width="15" height="9" fill="#fcc433" stroke="#222" stroke-width="2.400"/>',
}
</script>

<template>
  <div class="desktop">
    <svg class="defs" width="0" height="0">
      <defs>
        <pattern id="check" width="4" height="4" patternUnits="userSpaceOnUse">
          <rect width="2" height="2" fill="#fff" /><rect x="2" y="2" width="2" height="2" fill="#fff" />
        </pattern>
        <mask id="dither" maskUnits="userSpaceOnUse" x="-4" y="-4" width="60" height="60">
          <rect x="-4" y="-4" width="60" height="60" fill="url(#check)" />
        </mask>
        <linearGradient id="blueG" x1="0" y1="0" x2="1" y2="1"><stop offset="0" stop-color="#9fc0e4" /><stop offset=".5" stop-color="#cfe0f3" /><stop offset="1" stop-color="#eef4fb" /></linearGradient>
        <linearGradient id="blueD" x1="0" y1="0" x2="1" y2="1"><stop offset="0" stop-color="#fff" /><stop offset="1" stop-color="#7fa3cb" /></linearGradient>
        <linearGradient id="blueD2" x1="0" y1="0" x2="1" y2="1"><stop offset="0" stop-color="#c4e4ee" /><stop offset="1" stop-color="#2f6596" /></linearGradient>
        <linearGradient id="pinkG" x1="0" y1="0" x2="1" y2="1"><stop offset="0" stop-color="#fff" /><stop offset="1" stop-color="#ff9aa6" /></linearGradient>
        <linearGradient id="yelG" x1="0" y1="0" x2="1" y2="1"><stop offset="0" stop-color="#fff" /><stop offset="1" stop-color="#fce43c" /></linearGradient>
        <linearGradient id="skinG" x1="0" y1="0" x2=".6" y2="1"><stop offset="0" stop-color="#fff" /><stop offset="1" stop-color="#f3b294" /></linearGradient>
        <linearGradient id="greenG" x1="0" y1="0" x2="1" y2="0"><stop offset="0" stop-color="#fff" /><stop offset="1" stop-color="#5cb46a" /></linearGradient>
        <linearGradient id="greenD" x1="0" y1="0" x2="1" y2="0"><stop offset="0" stop-color="#3c8a06" /><stop offset=".6" stop-color="#8fd84a" /><stop offset="1" stop-color="#6ab82c" /></linearGradient>
        <linearGradient id="grayG" x1="0" y1="0" x2="0" y2="1"><stop offset="0" stop-color="#555" /><stop offset=".5" stop-color="#888" /><stop offset="1" stop-color="#eee" /></linearGradient>
        <linearGradient id="whiteG" x1="0" y1="0" x2="1" y2="1"><stop offset="0" stop-color="#fff" /><stop offset="1" stop-color="#ddd" /></linearGradient>
        <linearGradient id="pageG" x1="0" y1="0" x2="1" y2="1"><stop offset="0" stop-color="#c8c8c8" /><stop offset="1" stop-color="#fff" /></linearGradient>
        <linearGradient id="lockG" x1="0" y1="0" x2="1" y2="0"><stop offset="0" stop-color="#fff" /><stop offset="1" stop-color="#f2d024" /></linearGradient>
      </defs>
    </svg>

    <div class="window">
      <header class="titlebar">
        <div class="lights"><i class="red"></i><i class="amber"></i><i class="green"></i></div>
        <svg class="xicon" width="32" height="32" viewBox="0 0 32 32">
          <rect x="1" y="1" width="29" height="30" fill="#e9e9e9" stroke="#b4b4b4" stroke-width="2" />
          <path d="M5 5h6l16 23h-6z" fill="#444" /><path d="M26 4L17 15M14 18L6 28" stroke="#666" stroke-width="2" />
        </svg>
        <span v-fit="306" class="title">*workflow.svg - Inkscape</span>
      </header>

      <nav class="menubar">
        <span v-for="m in menus" :key="m[0]" v-fit="m[1]">{{ m[0] }}</span>
      </nav>

      <div class="toolbar">
        <template v-for="(g, gi) in commands" :key="gi">
          <span v-for="c in g" :key="c" class="cell"><svg width="32" height="32" v-html="art[c]"></svg></span>
          <i class="vsep"></i>
        </template>
        <span class="lab lx">X:</span>
        <div class="spin off"><span class="val"><b v-fit="81">501.000</b></span><span class="btns"><svg viewBox="0 0 32 32" v-html="art.chevU"></svg><svg viewBox="0 0 32 32" v-html="art.chevD"></svg></span></div>
        <span class="lab ly">Y:</span>
        <div class="spin off"><span class="val"><b v-fit="80">589.868</b></span><span class="btns"><svg viewBox="0 0 32 32" v-html="art.chevU"></svg><svg viewBox="0 0 32 32" v-html="art.chevD"></svg></span></div>
        <span class="lab lw">W:</span>
        <div class="spin off"><span class="val"><b v-fit="80">220.961</b></span><span class="btns"><svg viewBox="0 0 32 32" v-html="art.chevU"></svg><svg viewBox="0 0 32 32" v-html="art.chevD"></svg></span></div>
        <svg class="ratio" width="32" height="32" v-html="art.lock"></svg>
        <span class="lab lh">H:</span>
        <div class="spin off"><span class="val"><b v-fit="78">164.695</b></span><span class="btns"><svg viewBox="0 0 32 32" v-html="art.chevU"></svg><svg viewBox="0 0 32 32" v-html="art.chevD"></svg></span></div>
        <div class="combo unit"><span>px</span><svg width="28" height="28" viewBox="0 0 32 32" v-html="art.chevD"></svg></div>
        <i class="vsep us"></i>
        <span v-for="(a, i) in affect" :key="a" class="cell" :class="{ pressed: i === 0 }"><svg width="32" height="32" v-html="art[a]"></svg></span>
      </div>

      <main class="main">
        <aside class="toolbox">
          <span v-for="(t, i) in tools" :key="t" class="tool" :class="{ pressed: i === 0 }"><svg width="48" height="46" v-html="art[t]"></svg></span>
        </aside>

        <section class="editor">
          <span></span>
          <svg class="hruler" width="1854" height="30">
            <g v-for="t in hTicks" :key="t.x">
              <rect :x="t.x" :y="28 - t.h" width="2" :height="t.h" />
              <text v-if="t.label" :x="t.x + 4" y="22">{{ t.label }}</text>
            </g>
            <path d="M200 20h16l-8 9z" /><rect y="28" width="1854" height="2" />
          </svg>
          <svg class="vruler" width="30" height="1590">
            <g v-for="t in vTicks" :key="t.y">
              <rect :x="28 - t.w" :y="t.y" :width="t.w" height="2" />
              <text v-for="(d, k) in t.digits" :key="k" x="5" :y="t.y + 16 + k * 16.200">{{ d }}</text>
            </g>
            <path d="M20 40v16l8-8z" /><rect x="28" width="2" height="1588" />
          </svg>
          <svg class="canvas" width="1856" height="1590" viewBox="142 202 1856 1590">
            <path d="M179 1794V471H2000" fill="none" stroke="#666" stroke-width="2" />
            <rect v-for="(b, i) in boxes" :key="i" :x="b[0]" :y="b[1]" width="528" height="393" fill="#e6e6e6" />
            <g v-for="(a, i) in arrows" :key="'a' + i">
              <path :d="`M${a[0]} ${a[1]}h98`" stroke="#000" stroke-width="3" />
              <path :d="`M${a[0] + 96} ${a[1] - 14}l33 14-33 14z`" />
            </g>
            <path d="M491 1412V1489H1634.500V1409" fill="none" stroke="#000" stroke-width="2.600" />
            <path d="M478 1414l14.500-33 14.500 33z" />
            <path d="M1639 1104V1352M1624 1104h30M1624 1352h30M1505 1228H1777M1505 1213v31M1777 1213v31" fill="none" stroke="#222" stroke-width="2.200" />
            <text x="236" y="538" font-size="35">A</text>
            <text x="234" y="1006" font-size="35">B</text>
            <text v-for="c in captions" :key="c[0]" :x="c[1]" :y="c[2] + 0.500" font-size="26.500" :textLength="c[3]" lengthAdjust="spacingAndGlyphs">{{ c[0] }}</text>
          </svg>
          <span></span>
          <div class="hscroll"><i></i></div>
        </section>

        <div class="vcol">
          <span class="zoombtn pressed"><svg width="30" height="32" viewBox="0 0 30 32"><circle cx="13" cy="13" r="9" fill="#eee" fill-opacity=".5" stroke="#555" stroke-width="2" /><path d="M19 20l8 9" stroke="#555" stroke-width="4" /><path d="M10 9v8M16 9v8M13 11v1M13 15v1" stroke="#888" stroke-width="1.600" /></svg></span>
          <div class="vscroll"><i></i></div>
          <svg class="cms" width="24" height="26"><g mask="url(#dither)"><path d="M2 0l12 7v11H2z" fill="#0a8a1a" /><path d="M14 7l9 9-9 4z" fill="#a00a1a" /><path d="M2 15l12 3-8 8z" fill="#12109a" /></g><path d="M3 1l19 14L7 24z" fill="none" stroke="#999" /></svg>
        </div>
        <div class="grip"><i v-for="n in 5" :key="n"></i></div>

        <aside class="dock">
          <div class="dockhead">
            <svg width="32" height="32" v-html="art.layers"></svg>
            <span v-fit="243">Layers (Shift+Ctrl+L)</span>
            <svg class="dbtn" width="22" height="24"><rect x="1" y="1" width="20" height="21" rx="3" fill="none" stroke="#8b8e89" stroke-width="2" /><path d="M14 6v12l-7-6z" fill="#777" /></svg>
            <svg class="dbtn" width="22" height="24"><rect x="1" y="1" width="20" height="21" rx="3" fill="none" stroke="#8b8e89" stroke-width="2" /><path d="M6 6l10 12M16 6L6 18" stroke="#777" stroke-width="4" /></svg>
          </div>
          <div class="panel">
            <div class="list">
              <div class="lrow sel"><svg width="28" height="28" viewBox="0 0 32 32" v-html="art.eye"></svg><svg class="lk" width="32" height="32" v-html="art.lock"></svg><span v-fit="136">annotations</span></div>
              <div class="lrow"><svg width="28" height="28" viewBox="0 0 32 32" v-html="art.eye"></svg><svg class="lk" width="32" height="32" v-html="art.lock"></svg><span v-fit="87">Layer 1</span></div>
            </div>
            <div class="lbtns">
              <svg width="32" height="32" v-html="art.plus"></svg><svg width="32" height="32" v-html="art.minus"></svg><b></b>
              <svg v-for="k in ['lTop', 'lUp', 'lDown', 'lBottom']" :key="k" width="32" height="32" v-html="art[k]"></svg>
            </div>
            <div class="blend">
              <span v-fit="151">Blend mode:</span>
              <div class="combo"><span v-fit="86">Normal</span><svg width="32" height="32" v-html="art.chevD"></svg></div>
            </div>
            <div class="opacity">
              <div class="bar"><span v-fit="133">Opacity (%)</span><span v-fit="69">100.0</span></div>
              <span class="btns"><svg class="dim" viewBox="0 0 32 32" v-html="art.chevU"></svg><svg viewBox="0 0 32 32" v-html="art.chevD"></svg></span>
            </div>
          </div>
          <div v-for="(d, i) in dialogs" :key="d[0]" class="dialog" :class="{ active: i === 3 }">
            <svg width="32" height="32" v-html="art[d[1]]"></svg>
            <span v-fit="d[2]">{{ d[0] }}</span>
            <svg class="cv" width="32" height="32" v-html="art.chevU"></svg>
          </div>
          <div class="dots"><i v-for="n in 5" :key="n"></i></div>
        </aside>

        <aside class="bar-a">
          <template v-for="(c, i) in commandBar" :key="i">
            <i v-if="c === '|'" class="hsep"></i>
            <span v-else class="slot"><svg width="32" height="32" v-html="art[c]"></svg></span>
          </template>
          <svg class="more" width="32" height="32" v-html="art.chevR"></svg>
        </aside>
        <aside class="bar-b">
          <template v-for="(c, i) in snapBar" :key="i">
            <i v-if="c === '|'" class="hsep"></i>
            <span v-else class="slot" :class="{ pressed: c[0] === '*' }"><svg width="32" height="32" v-html="art[c.replace('*', '')]"></svg></span>
          </template>
        </aside>
      </main>

      <div class="palette">
        <div class="strip">
          <div class="swatches">
            <svg width="28" height="26"><rect width="28" height="26" fill="#fff" /><path d="M1 0l26 26M27 0L1 26" stroke="#7a1010" stroke-width="2" /></svg>
            <i v-for="(c, i) in palette" :key="i" :style="{ background: c }"></i>
          </div>
          <div class="pscroll"><i></i></div>
        </div>
        <svg class="pmenu" width="25" height="26" viewBox="4 2 25 28" v-html="art.chevL"></svg>
      </div>

      <footer class="status">
        <div class="fs"><p><span v-fit="36">Fill:</span><em v-fit="41">N/A</em></p><p><span v-fit="69">Stroke:</span><em v-fit="41">N/A</em></p></div>
        <span class="olab">O:</span>
        <div class="spin off small"><span class="val">0</span><span class="btns"><svg viewBox="0 0 32 32" v-html="art.chevU"></svg><svg viewBox="0 0 32 32" v-html="art.chevD"></svg></span></div>
        <i class="sline"></i>
        <svg class="seye" width="28" height="28" viewBox="0 0 32 32" v-html="art.eye"></svg>
        <svg class="slock" width="32" height="32" v-html="art.lock"></svg>
        <div class="combo layer"><span v-fit="135">•annotations</span><svg width="32" height="32" v-html="art.chevD"></svg></div>
        <span v-fit="1269" class="msg">No objects selected. Click, Shift+click, Alt+scroll mouse on top of objects, or drag around objects to select.</span>
        <i class="sline right"></i>
        <div class="coords"><p><span>X:</span><em v-fit="60">72.01</em></p><p><span>Y:</span><em v-fit="83">1081.75</em></p></div>
        <span class="zlab">Z:</span>
        <div class="spin zoom"><span class="val"><b v-fit="54">119%</b></span><span class="btns"><svg viewBox="0 0 32 32" v-html="art.chevU"></svg><svg viewBox="0 0 32 32" v-html="art.chevD"></svg></span></div>
        <svg class="resize" width="30" height="28"><rect width="30" height="28" fill="#fafafa" /><path d="M7 26L29 6M14 26l15-13M21 26l8-7" stroke="#777" stroke-width="2" /></svg>
      </footer>
    </div>
  </div>
</template>

<style>
body { margin: 0; overflow: hidden; background: #fff; }
</style>

<style scoped>
.desktop { box-sizing: border-box; width: 3170px; height: 1990px; padding: 15px 31px 0 32px; overflow: hidden; font-family: "DejaVu Sans Condensed", "DejaVu Sans", sans-serif; font-stretch: condensed; font-size: 24.500px; color: #2e3436; line-height: 30px; white-space: nowrap; }
.defs { display: block; }
svg { flex: none; overflow: visible; }
i, em, b { font-style: normal; font-weight: normal; }
p { margin: 0; }
span[class], i { box-sizing: border-box; }
.window { width: 3107px; height: 1927px; display: flex; flex-direction: column; background: #ededed; border-radius: 9px 9px 0 0; box-shadow: 0 0 2px rgba(0, 0, 0, .45), 0 14px 27px rgba(0, 0, 0, .78); }
.titlebar { height: 45px; flex: none; display: flex; align-items: center; border-radius: 9px 9px 0 0; background: linear-gradient(#f6f6f6 0, #e9e9e9 4px, #d2d2d2 100%); }
.lights { display: flex; gap: 16px; padding-left: 16px; width: 1364px; }
.lights i { width: 24px; height: 24px; border-radius: 50%; border: 2px solid #e0443e; background: #fc5b57; }
.lights .amber { background: #fdbc40; border-color: #dfa033; }
.lights .green { background: #33c748; border-color: #1fa834; }
.xicon { margin-right: 11px; }
.title { color: #000; font-size: 25px; padding-top: 3px; }
.menubar { height: 44px; flex: none; display: flex; align-items: center; gap: 26.200px; padding-left: 13px; }
.menubar span, .dialog span, .dockhead span, .lrow span, .title, .msg { display: inline-block; flex: none; }
.toolbar { height: 68px; flex: none; display: flex; align-items: center; padding-left: 8px; }
.cell { width: 56px; height: 54px; flex: none; display: flex; align-items: center; justify-content: center; }
.vsep { width: 2px; height: 36px; background: #b6b6b4; margin: 0 11px; flex: none; }
.vsep + .cell { margin-left: 0; }
.pressed { border: 2px solid #b4b7b3; border-top-color: #a2a7a2; border-radius: 6px; background: linear-gradient(#a3a8a3, #e2e2e2); box-shadow: 0 2px 0 #f8f8f8; }
.lab { flex: none; color: #a9aba8; font-size: 22px; text-shadow: 2px 2px 0 #fff; }
.lx { width: 31px; margin-left: 14px; }
.ly { width: 32px; margin-left: 18px; }
.lw { width: 36px; margin-left: 17px; }
.lh { width: 33px; margin-left: 29px; }
.ratio { margin-left: 12px; }
.spin { box-sizing: border-box; flex: none; width: 121px; height: 46px; display: flex; border: 2px solid #b6b9b5; border-radius: 7px; background: #fff; overflow: hidden; font-size: 22px; }
.spin .val { flex: 1; width: 0; padding-left: 8px; line-height: 43px; overflow: hidden; }
.val b { display: inline-block; }
.spin.off { background: #f3f3f1; color: #b0b2af; }
.btns { width: 26px; flex: none; display: flex; flex-direction: column; border-left: 2px solid #e6e6e4; }
.btns svg { height: 50%; width: 24px; }
.btns svg + svg { border-top: 2px solid #e6e6e4; box-sizing: border-box; }
.off .btns svg, .btns .dim { opacity: .6; }
.combo { box-sizing: border-box; display: flex; align-items: center; justify-content: space-between; border: 2px solid #b0b3af; border-radius: 7px; background: linear-gradient(#fdfdfd, #d9d9d9); flex: none; }
.unit { width: 86px; height: 46px; margin-left: 2px; padding: 0 7px 0 8px; font-size: 22px; }
.us { margin: 0 14px 0 12px; }
.us + .cell { margin-left: 0; margin-right: 2px; width: 52px; }
.main { height: 1660px; flex: none; display: flex; }
.toolbox { width: 80px; flex: none; padding-top: 9px; display: flex; flex-direction: column; align-items: center; box-sizing: border-box; }
.tool { width: 60px; height: 63px; margin-bottom: 1px; flex: none; display: flex; align-items: center; justify-content: center; }
.editor { flex: none; display: grid; grid-template: 30px 1590px 40px / 30px 1854px; }
.hruler, .vruler { fill: #2e3436; overflow: hidden; }
.hruler text, .vruler text { font-size: 14.500px; fill: #555a5c; font-family: "DejaVu Sans", sans-serif; font-stretch: normal; }
.canvas { background: #fff; overflow: hidden; font-family: "DejaVu Sans", sans-serif; font-stretch: normal; }
.hscroll { margin: 6px -2px 8px 0; height: 26px; background: #d5d5d5; padding: 6px 0 0 626px; box-sizing: border-box; }
.hscroll i { display: block; width: 588px; height: 14px; border-radius: 7px; background: #9b9c9e; }
.vcol { width: 40px; flex: none; padding-top: 2px; box-sizing: border-box; display: flex; flex-direction: column; }
.zoombtn { width: 34px; height: 37px; margin-left: 4px; display: flex; align-items: center; justify-content: center; flex: none; }
.vscroll { width: 26px; height: 1579px; margin: 2px 0 0 8px; background: #d5d5d5; padding: 485px 0 0 6px; box-sizing: border-box; flex: none; }
.vscroll i { display: block; width: 15px; height: 327px; border-radius: 8px; background: #9b9c9e; }
.cms { margin: 8px 0 0 10px; }
.grip { width: 13px; flex: none; display: flex; flex-direction: column; align-items: center; justify-content: center; gap: 7px; }
.grip i, .dots i { width: 4px; height: 4px; background: #c4c4c4; }
.dock { box-sizing: border-box; width: 943px; margin-top: 2px; flex: none; border: 2px solid #a3a5a3; border-right-color: #fff; border-bottom-color: #fff; display: flex; flex-direction: column; }
.dockhead { height: 52px; flex: none; display: flex; align-items: center; padding: 2px 0 0 3px; box-sizing: border-box; }
.dockhead span { margin: 0 auto 0 2px; line-height: 47px; }
.dbtn { margin-right: 26px; }
.dbtn:last-child { margin-right: 18px; }
.panel { box-sizing: border-box; width: 933px; height: 838px; margin-left: 3px; border: 2px solid #b6b9b5; padding: 6px 7px 0; flex: none; }
.list { box-sizing: border-box; height: 640px; border: 2px solid #b0b3af; background: #fff; }
.lrow { height: 50px; display: flex; align-items: center; padding: 0 0 1px 9px; box-sizing: border-box; }
.lrow span { padding-top: 2px; margin-left: 47px; }
.lrow .lk { margin-left: 19px; }
.sel { background: #3a80ca; color: #fff; }
.lbtns { display: flex; height: 32px; margin: 12px 12px 0 11px; gap: 24px; }
.lbtns b { flex: 1; }
.blend { display: flex; align-items: center; margin-top: 17px; height: 51px; justify-content: space-between; }
.blend .combo { width: 741px; height: 51px; padding: 0 5px 0 7px; }
.opacity { box-sizing: border-box; display: flex; height: 52px; margin-top: 12px; border: 2px solid #b6b9b5; border-radius: 6px; background: #fff; overflow: hidden; }
.opacity .bar { box-sizing: border-box; flex: none; width: 867px; height: 40px; margin: 5px 8px 0 6px; background: #4a90d9; border: solid; border-width: 2px 2px 3px; border-color: #9cc4ee #000 #000 #9cc4ee; color: #fff; display: flex; justify-content: space-between; padding: 3px 1px 0 7px; }
.opacity .btns { width: 30px; background: #f8f8f8; }
.opacity .btns svg { width: 28px; }
.dialog { box-sizing: border-box; width: 928px; height: 42px; margin: 6px 0 0 8px; flex: none; display: flex; align-items: center; border: 2px solid #b4b7b3; border-radius: 6px; background: linear-gradient(#fbfbfb, #d9d9d9); padding-left: 2px; box-shadow: 0 2px 0 #f7f7f7; }
.panel + .dialog { margin-top: 7px; }
.dialog span { margin-left: 5px; }
.dialog .cv { margin-left: auto; margin-right: 4px; }
.dialog.active { background: linear-gradient(#a0a5a0, #e0e0e0); }
.dots { display: flex; justify-content: center; gap: 7px; height: 4px; margin-top: 11px; }
.dock > .dialog, .dots { flex: none; }
.bar-a, .bar-b { flex: none; padding-top: 10px; display: flex; flex-direction: column; align-items: center; box-sizing: border-box; }
.bar-a { width: 75px; }
.bar-b { width: 71px; }
.slot { width: 53px; height: 54px; margin: 1px 0; flex: none; display: flex; align-items: center; justify-content: center; }
.hsep { width: 37px; height: 2px; margin: 11px 0; background: #b6b6b4; flex: none; }
.more { margin-top: 44px; }
.palette { height: 58px; flex: none; display: flex; }
.strip { width: 3082px; flex: none; }
.swatches { height: 26px; border-top: 2px solid #a3a5a3; border-bottom: 2px solid #fff; display: flex; overflow: hidden; }
.swatches i { width: 26px; height: 26px; flex: none; }
.pscroll { margin-top: 2px; height: 26px; background: #d5d5d5; padding: 6px; box-sizing: border-box; }
.pscroll i { display: block; width: 831px; height: 14px; border-radius: 7px; background: #9b9c9e; }
.status { height: 52px; flex: none; display: flex; align-items: center; padding-top: 2px; box-sizing: border-box; }
.fs { width: 256px; padding: 2px 0 0 4px; box-sizing: border-box; font-size: 21px; line-height: 24px; }
.fs p { display: flex; }
.fs p span { display: block; margin-right: auto; }
.fs em { margin-right: 72px; }
.olab { width: 27px; font-size: 22px; }
.spin.small { width: 92px; }
.sline { width: 2px; height: 48px; margin: 4px 6px 0 5px; background: #aaacaa; flex: none; }
.seye { margin-left: -1px; }
.slock { margin-left: 7px; }
.combo.layer { width: 202px; height: 46px; margin-left: 4px; padding: 0 4px 0 11px; font-weight: bold; font-size: 21.500px; }
.msg { margin-left: 11px; padding-top: 1px; }
.sline.right { margin: 4px 5px 0 auto; }
.coords { width: 106px; font-family: "DejaVu Sans Mono", monospace; font-size: 21px; line-height: 24px; }
.coords p { display: flex; justify-content: space-between; }
.coords span { font-family: "DejaVu Sans Condensed", "DejaVu Sans", sans-serif; font-size: 20px; }
.zlab { width: 26px; margin-left: 16px; font-size: 22px; }
.spin.zoom { width: 111px; }
.spin.zoom .val { padding-left: 13px; }
.resize { margin: 22px 0 0 9px; }
</style>
